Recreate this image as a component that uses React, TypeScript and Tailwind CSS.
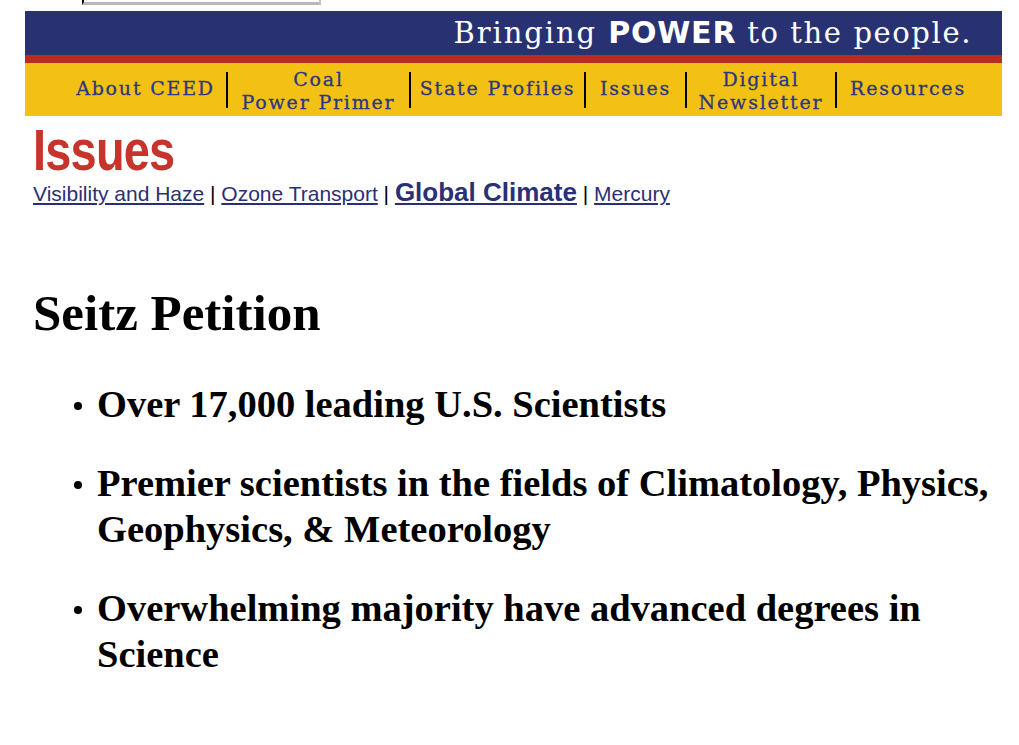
import React from 'react';

const navItems = [
  { lines: ['About CEED'], width: 'w-[161px]' },
  { lines: ['Coal', 'Power Primer'], width: 'w-[181px]' },
  { lines: ['State Profiles'], width: 'w-[173px]' },
  { lines: ['Issues'], width: 'w-[99px]' },
  { lines: ['Digital', 'Newsletter'], width: 'w-[148px]' },
  { lines: ['Resources'], width: 'w-[142px]' },
];

const points = [
  'Over 17,000 leading U.S. Scientists',
  'Premier scientists in the fields of Climatology, Physics, Geophysics, & Meteorology',
  'Overwhelming majority have advanced degrees in Science',
];

const App: React.FC = () => {
  return (
    <div className="min-h-[745px] w-[1019px] bg-white">
      {/* leftover box above the banner */}
      <div className="h-[11px]">
        <div className="ml-[82px] h-[5px] w-[239px] border-l-2 border-r-2 border-b-[3px] border-l-black border-r-[#c4c4c4] border-b-[#b8b8b8]" />
      </div>

      {/* banner */}
      <div className="mx-[25px] w-[977px]">
        <div className="flex h-[44px] items-center justify-end bg-[#283272] pr-[30px] text-white">
          <span className="font-['DejaVu_Serif',serif] text-[29px] leading-none tracking-[1.9px]">Bringing&nbsp;</span>
          <span className="font-['DejaVu_Sans',sans-serif] text-[30px] font-bold leading-none tracking-[0.8px]">POWER</span>
          <span className="font-['DejaVu_Serif',serif] text-[29px] leading-none tracking-[1.6px]">&nbsp;to the people.</span>
        </div>
        <div className="h-[8px] bg-[#b92b25]" />
        <div className="flex h-[53px] items-center bg-[#f2c114] pl-[40px] font-['DejaVu_Serif',serif] text-[19px] leading-[23px] tracking-[1.8px] text-[#2d3681] [-webkit-text-stroke:0.3px_#2d3681]">
          {navItems.map((item, i) => (
            <React.Fragment key={i}>
              {i > 0 && <div className="h-[36px] w-[2px] bg-black" />}
              <div className={`${item.width} text-center ${item.lines.length > 1 ? 'pt-[2px]' : 'pb-[3px]'}`}>
                {item.lines.map((l) => (
                  <div key={l}>{l}</div>
                ))}
              </div>
            </React.Fragment>
          ))}
        </div>
      </div>

      {/* section header */}
      <div className="px-[33px] pt-[5px]">
        <div className="origin-left scale-x-[0.81] font-['Liberation_Sans',sans-serif] text-[58px] font-bold leading-[58px] tracking-[-1px] text-[#c6342c]">
          Issues
        </div>
        <div className="mt-[1px] font-['Liberation_Sans',sans-serif] text-[21px] leading-[24px] text-black">
          <a href="#" className="text-[#2a3075] underline">Visibility and Haze</a>
          {' | '}
          <a href="#" className="text-[#2a3075] underline">Ozone Transport</a>
          {' | '}
          <a href="#" className="text-[26px] font-bold text-[#2a3075] underline">Global Climate</a>
          {' | '}
          <a href="#" className="text-[#2a3075] underline">Mercury</a>
        </div>
      </div>

      {/* content */}
      <div className="pl-[33px] pr-[8px] pt-[77px] font-['Liberation_Serif',serif] font-bold text-black">
        <h1 className="text-[51px] leading-[60px]">Seitz Petition</h1>
        <ul className="mt-[38px] pl-[41px] text-[38.5px] leading-[46px]">
          {points.map((p) => (
            <li key={p} className="mb-[33px] flex items-start">
              <span className="mt-[21px] mr-[15px] h-[8px] w-[8px] shrink-0 rounded-full bg-black" />
              <span>{p}</span>
            </li>
          ))}
        </ul>
      </div>
    </div>
  );
};

export default App;
